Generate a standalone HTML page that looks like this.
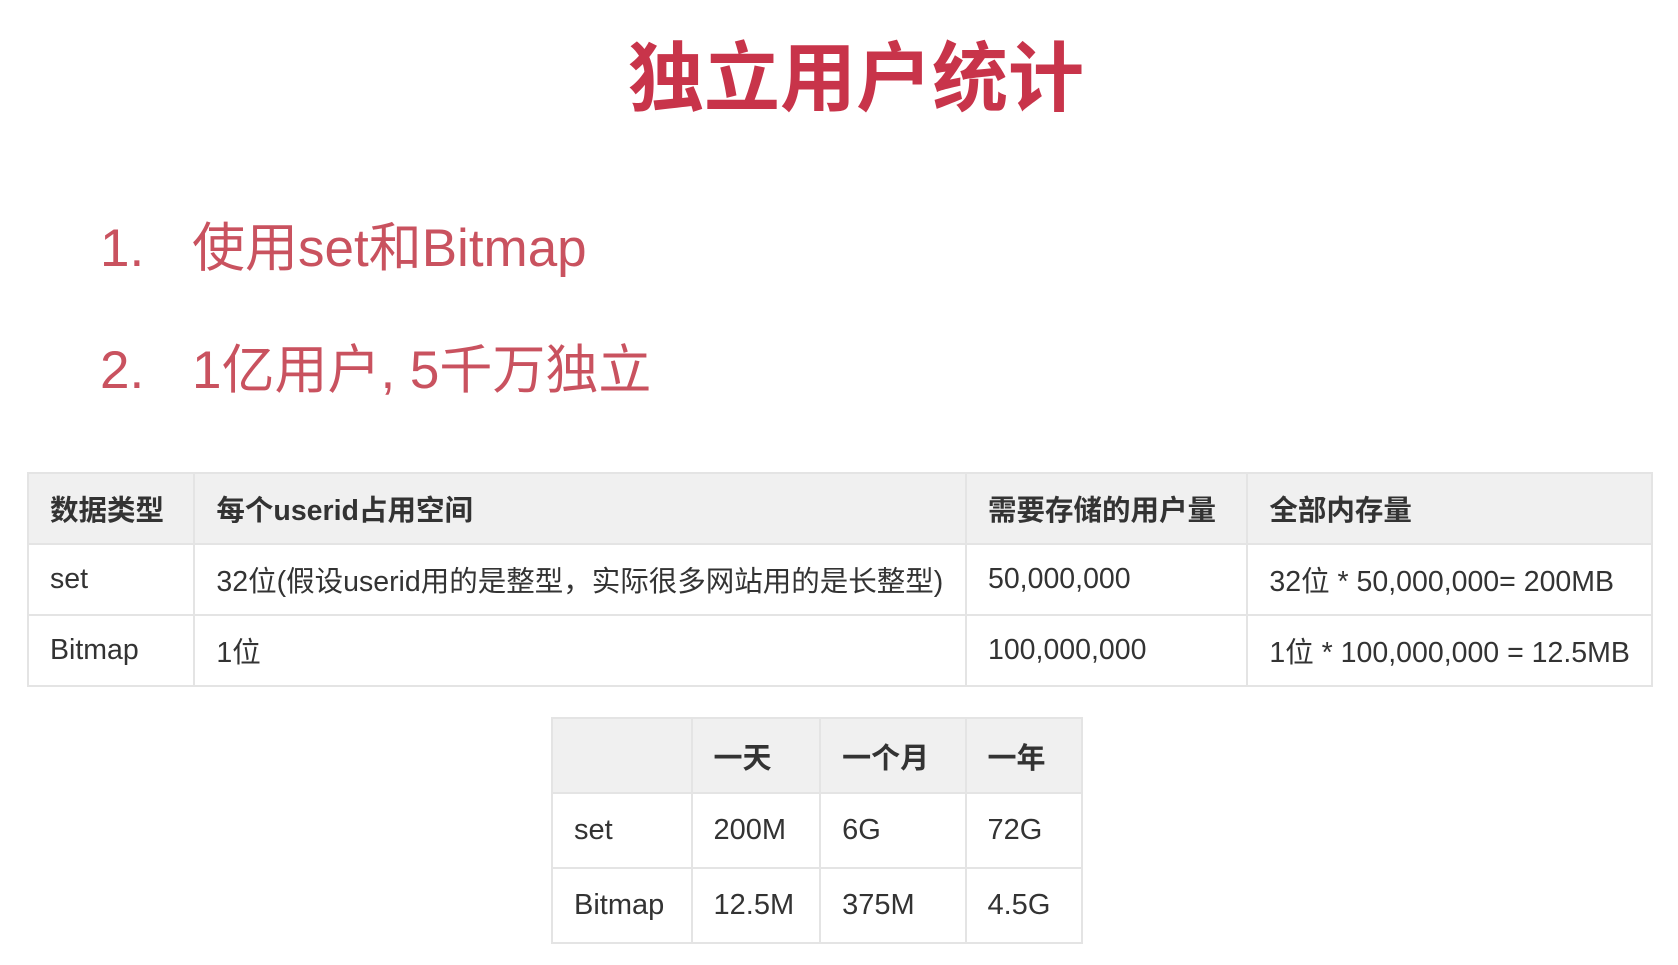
<!DOCTYPE html>
<html><head><meta charset="utf-8"><style>
html,body{margin:0;padding:0;background:#fff;width:1678px;height:965px;overflow:hidden;position:relative;font-family:"Liberation Sans","Noto Sans CJK SC",sans-serif}
.t{position:absolute;left:0;width:1712px;top:35px;text-align:center;font-size:76px;font-weight:bold;color:#c8344a;line-height:90px}
.i{position:absolute;font-size:53px;color:#c9525f;line-height:60px}
table{position:absolute;border-collapse:collapse;color:#333}
td{border:2px solid #e4e4e4;padding:0 0 0 21px;vertical-align:middle;white-space:nowrap}
tr.h td{background:#f0f0f0;font-weight:bold}
#a{left:27px;top:472px;width:1626px;font-size:28.5px}
#a tr{height:71px}
#b{left:551px;top:717px;width:532px;font-size:29px}
#b tr{height:75px}
</style></head><body>
<div class="t">独立用户统计</div>
<div class="i" style="left:100px;top:219px">1.</div>
<div class="i" style="left:192px;top:219px">使用set和Bitmap</div>
<div class="i" style="left:100px;top:341px">2.</div>
<div class="i" style="left:192px;top:341px">1亿用户, 5千万独立</div>
<table id="a">
<colgroup><col style="width:167px"><col style="width:772px"><col style="width:282px"><col style="width:405px"></colgroup>
<tr class="h"><td>数据类型</td><td>每个userid占用空间</td><td>需要存储的用户量</td><td>全部内存量</td></tr>
<tr><td>set</td><td>32位(假设userid用的是整型，实际很多网站用的是长整型)</td><td>50,000,000</td><td>32位 * 50,000,000= 200MB</td></tr>
<tr><td>Bitmap</td><td>1位</td><td>100,000,000</td><td>1位 * 100,000,000 = 12.5MB</td></tr>
</table>
<table id="b">
<colgroup><col style="width:140px"><col style="width:129px"><col style="width:146px"><col style="width:117px"></colgroup>
<tr class="h"><td></td><td>一天</td><td>一个月</td><td>一年</td></tr>
<tr><td>set</td><td>200M</td><td>6G</td><td>72G</td></tr>
<tr><td>Bitmap</td><td>12.5M</td><td>375M</td><td>4.5G</td></tr>
</table>
</body></html>
